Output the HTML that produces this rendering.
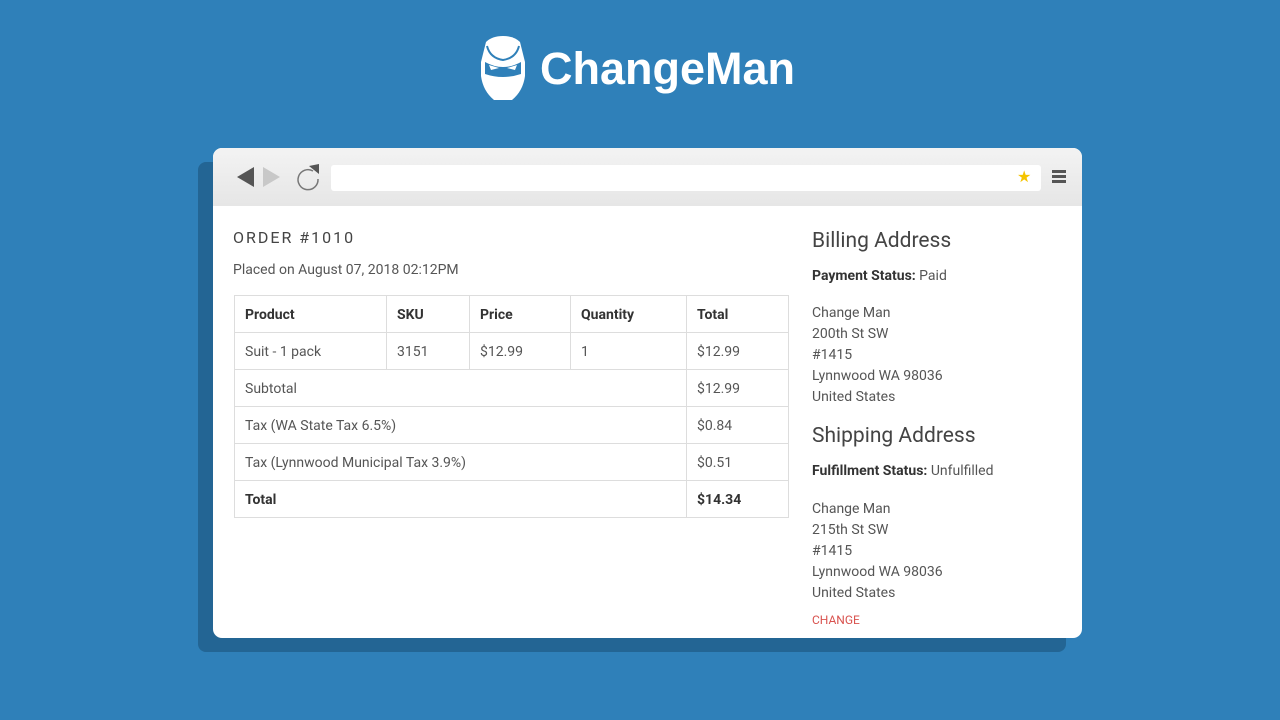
<!DOCTYPE html>
<html><head><style>
body{margin:0;width:1280px;height:720px;background:#2f80b9;position:relative;overflow:hidden;font-family:"Roboto","Liberation Sans",sans-serif;color:#444}
.shadow{position:absolute;left:198px;top:162px;width:868px;height:490px;background:#236594;border-radius:8px}
.win{position:absolute;left:213px;top:148px;width:869px;height:490px;background:#fff;border-radius:9px;overflow:hidden}
.bar{height:58px;background:linear-gradient(#f3f3f3,#e6e6e6);position:relative}
.url{position:absolute;left:118px;top:17px;width:710px;height:26px;background:#fff;border-radius:3px}
.a{position:absolute;font-size:14px}
table{position:absolute;left:21px;top:147px;width:555px;border-collapse:collapse;font-size:14px}
td{border:1px solid #ddd;height:35px;padding:1px 10px 0;color:#555}
th{border:1px solid #ddd;height:35px;padding:1px 10px 0;text-align:left;color:#333}
b{color:#333}
</style></head><body>
<svg style="position:absolute;left:478px;top:36px" width="50" height="66" viewBox="0 0 50 66">
<path d="M8 6 Q14 0 25 0 Q36 0 42 6 L47 26 L47 40 Q45 55 34 64 L16 64 Q5 55 3 40 L3 26 Z" fill="#fff"/>
<path d="M7 26 Q25 36 43 26 L43 38 Q25 44 7 38 Z" fill="#2f80b9"/>
<path d="M11 29 L21 32 L13 34Z M39 29 L29 32 L37 34Z" fill="#fff"/>
<path d="M9 10 Q12 22 25 24 Q38 22 41 10" stroke="#2f80b9" stroke-width="2" fill="none"/>
</svg>
<div style="position:absolute;left:540px;top:44px;font-size:45px;font-weight:bold;color:#fff;font-family:'Liberation Sans',sans-serif;line-height:50px">ChangeMan</div>
<div class="shadow"></div>
<div class="win">
<div class="bar">
<svg style="position:absolute;left:22px;top:16px" width="95" height="28"><path d="M2 13 L19 3 L19 23Z" fill="#555"/><path d="M45 13 L28 3 L28 23Z" fill="#c8c8c8"/><path d="M78 7 A10 10 0 1 0 83 15" stroke="#777" stroke-width="1.5" fill="none"/><path d="M74 2 L84 0 L84 10Z" fill="#555"/></svg>
<div class="url"></div>
<div style="position:absolute;left:804px;top:19px;color:#f5c400;font-size:16px">★</div>
<div style="position:absolute;left:839px;top:22px;width:14px;height:3px;background:#555;box-shadow:0 5px 0 #555,0 10px 0 #555"></div>
</div>
<div class="a" style="left:20px;top:80px;font-size:16px;letter-spacing:2px;color:#444">ORDER #1010</div>
<div class="a" style="left:20px;top:114px;color:#555">Placed on August 07, 2018 02:12PM</div>
<table>
<tr><th style="width:131px">Product</th><th style="width:62px">SKU</th><th style="width:80px">Price</th><th style="width:95px">Quantity</th><th>Total</th></tr>
<tr><td>Suit - 1 pack</td><td>3151</td><td>$12.99</td><td>1</td><td>$12.99</td></tr>
<tr><td colspan="4">Subtotal</td><td>$12.99</td></tr>
<tr><td colspan="4">Tax (WA State Tax 6.5%)</td><td>$0.84</td></tr>
<tr><td colspan="4">Tax (Lynnwood Municipal Tax 3.9%)</td><td>$0.51</td></tr>
<tr><th colspan="4">Total</th><th>$14.34</th></tr>
</table>
<div class="a" style="left:599px;top:81px;font-size:21px;color:#444">Billing Address</div>
<div class="a" style="left:599px;top:120px;color:#555"><b>Payment Status:</b> Paid</div>
<div class="a" style="left:599px;top:155px;line-height:21px;color:#555">Change Man<br>200th St SW<br>#1415<br>Lynnwood WA 98036<br>United States</div>
<div class="a" style="left:599px;top:276px;font-size:21px;color:#444">Shipping Address</div>
<div class="a" style="left:599px;top:315px;color:#555"><b>Fulfillment Status:</b> Unfulfilled</div>
<div class="a" style="left:599px;top:351px;line-height:21px;color:#555">Change Man<br>215th St SW<br>#1415<br>Lynnwood WA 98036<br>United States</div>
<div class="a" style="left:599px;top:465px;font-size:12px;color:#d9534f">CHANGE</div>
</div>
</body></html>
